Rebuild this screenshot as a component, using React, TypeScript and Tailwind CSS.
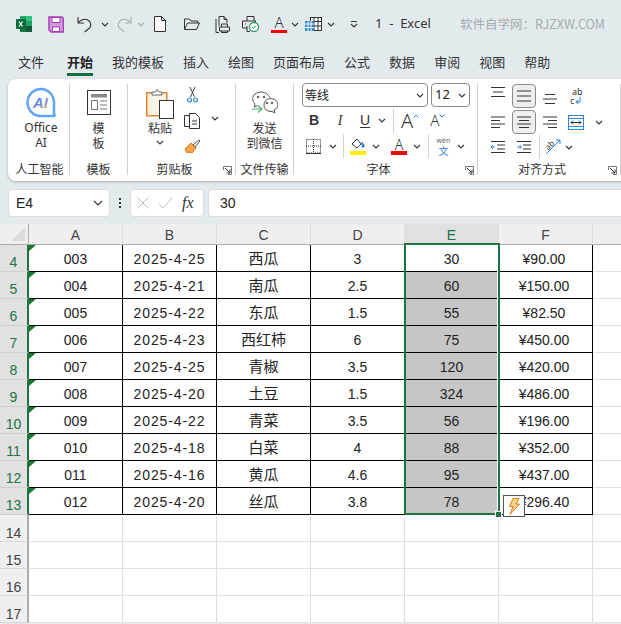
import type { ReactNode } from "react";

const cjk = "font-['Noto_Sans_CJK_SC','Noto_Sans',sans-serif]";
const cellFont = "font-['Liberation_Sans','Noto_Sans_CJK_SC',sans-serif]";

const rows = [
  [4, "003", "2025-4-25", "西瓜", "3", "30", "¥90.00"],
  [5, "004", "2025-4-21", "南瓜", "2.5", "60", "¥150.00"],
  [6, "005", "2025-4-22", "东瓜", "1.5", "55", "¥82.50"],
  [7, "006", "2025-4-23", "西红柿", "6", "75", "¥450.00"],
  [8, "007", "2025-4-25", "青椒", "3.5", "120", "¥420.00"],
  [9, "008", "2025-4-20", "土豆", "1.5", "324", "¥486.00"],
  [10, "009", "2025-4-22", "青菜", "3.5", "56", "¥196.00"],
  [11, "010", "2025-4-18", "白菜", "4", "88", "¥352.00"],
  [12, "011", "2025-4-16", "黄瓜", "4.6", "95", "¥437.00"],
  [13, "012", "2025-4-20", "丝瓜", "3.8", "78", "¥296.40"],
];

function Chev({ className = "" }: { className?: string }) {
  return (
    <svg viewBox="0 0 8 5" className={"w-2 h-[5px] shrink-0 " + className} fill="none" stroke="#333" strokeWidth="1.1">
      <path d="M1 1l3 3 3-3" />
    </svg>
  );
}

function Ic({ w, h, children, className = "" }: { w: number; h: number; children: ReactNode; className?: string }) {
  return (
    <svg width={w} height={h} viewBox={`0 0 ${w} ${h}`} fill="none" stroke="#333" strokeWidth="1" className={"shrink-0 " + className}>
      {children}
    </svg>
  );
}

function Launcher() {
  return (
    <Ic w={9} h={9}>
      <path d="M.5 4V.5h8V8.500H5" stroke="#777" />
      <path d="M2 2l5 5M7 3.500V7H3.500" stroke="#333" />
    </Ic>
  );
}

function Lines({ kind }: { kind: "top" | "bot" | "left" | "right" }) {
  const sets = {
    top: ["M1 1.500h14", "M3 6h10", "M1 10.500h14"],
    bot: ["M3 1.500h10", "M1 6h14", "M3 10.500h10"],
    left: ["M1 2h14", "M1 5.500h9", "M1 9h14", "M1 12.500h9"],
    right: ["M1 2h14", "M6 5.500h9", "M1 9h14", "M6 12.500h9"],
  };
  return <Ic w={16} h={14}>{sets[kind].map((d) => <path key={d} d={d} />)}</Ic>;
}

function Group({ w, label, children, launcher }: { w: number; label: string; children: ReactNode; launcher?: boolean }) {
  return (
    <div className="h-[91px] mt-[5px] shrink-0 flex flex-col border-r border-[#d2d2d2]" style={{ width: w }}>
      <div className="h-[75px]">{children}</div>
      <div className={"h-[16px] relative flex items-center justify-center text-[12px] leading-none text-[#333] " + (launcher ? "pr-[14px]" : "")}>
        <span className="mt-[3px] whitespace-nowrap">{label}</span>
        {launcher && <span className="absolute right-[3px] bottom-0 flex"><Launcher /></span>}
      </div>
    </div>
  );
}

function TitleBar() {
  return (
    <div className="h-[48px] flex items-center pl-[16px]">
      <svg width="16" height="16" viewBox="0 0 16 16" className="shrink-0">
        <rect x="4" width="12" height="16" rx="1" fill="#21a366" />
        <rect x="10" width="6" height="5" fill="#33c481" />
        <rect x="10" y="10" width="6" height="6" fill="#185c37" />
        <rect x="4" y="10" width="6" height="6" fill="#107c41" />
        <rect y="3" width="10" height="10" rx="1" fill="#0e6b3a" />
        <path d="M3 5.500l3.500 5M6.500 5.500l-3.500 5" stroke="#fff" strokeWidth="1.200" />
      </svg>
      <svg width="16" height="17" viewBox="0 0 16 17" className="ml-[16px] shrink-0">
        <path d="M1 1h13l1.500 1.500V16H3l-2-2z" fill="#d19ad9" stroke="#a63fb6" strokeWidth="1.500" />
        <rect x="4" y="1.500" width="8" height="5" fill="#fff" stroke="#a63fb6" />
        <rect x="4.500" y="11" width="7" height="4.500" fill="#fff" stroke="#a63fb6" />
      </svg>
      <Ic w={16} h={17} className="ml-[13px]">
        <path d="M1 1v6h6M1.500 6.500C4 3 8.500 2.500 11.500 4.500c3 2.500 3 6 .5 8L7.500 16" strokeWidth="1.100" />
      </Ic>
      <Chev className="ml-[8px]" />
      <Ic w={15} h={17} className="ml-[8px]">
        <path d="M14 1v6H8M13.500 6.500C11 3 6.500 2.500 3.500 4.500c-3 2.500-3 6-.5 8L7.500 16" stroke="#a9adb0" strokeWidth="1.100" />
      </Ic>
      <svg viewBox="0 0 8 5" className="w-2 h-[5px] ml-[5px] shrink-0" fill="none" stroke="#a9adb0" strokeWidth="1.100"><path d="M1 1l3 3 3-3" /></svg>
      <Ic w={12} h={16} className="ml-[9px]">
        <path d="M.5.500h7l4 4v11H.5zM7.500.500v4h4" fill="#fff" />
      </Ic>
      <Ic w={16} h={12} className="ml-[18px]">
        <path d="M.5 11V1h5l1.500 2h6.500v2M.5 11.500h12l3-6.500H3.500z" />
      </Ic>
      <Ic w={15} h={17} className="ml-[15px]">
        <path d="M4 10V.5h5l3 3V7M9 .5v3h3M1 16.500V3M1 16.500h3" />
        <path d="M4.500 11h10v4h-10zM6.500 11V8h6v3M6.500 15v1.500h6V15" />
      </Ic>
      <svg width="17" height="16" viewBox="0 0 17 16" className="ml-[12px] shrink-0" fill="none" stroke="#333">
        <path d="M5 5V.5h7V5M5 12H.5V5h13v2M3 8h1M5 10v5.500h3" />
        <circle cx="12" cy="11" r="4.500" fill="#fff" stroke="#3a9e6b" strokeWidth="1.300" />
        <path d="M10 11l1.500 1.500 2.500-3" stroke="#3a9e6b" />
      </svg>
      <div className="ml-[12px] w-[16px] h-[18px] flex flex-col items-center shrink-0">
        <span className="font-['Noto_Sans'] text-[15px] leading-[14px] text-[#333] font-light">A</span>
        <span className="mt-[1px] h-[4px] w-[16px] bg-[#ff0000]" />
      </div>
      <Chev className="ml-[4px]" />
      <svg width="17" height="16" viewBox="0 0 17 16" className="ml-[6px] shrink-0" fill="none" stroke="#333">
        <rect x="5.500" y="1.500" width="11" height="13" fill="#fff" />
        <path d="M5.500 5.500h11M5.500 10h11M9 1.500v13M13 1.500v13" />
        <rect x="0" y="5" width="9" height="10" fill="#2e86d6" stroke="none" />
        <path d="M0 8h9M0 11.500h9M3 5v10M6 5v10" stroke="#fff" />
      </svg>
      <Chev className="ml-[5px]" />
      <svg viewBox="0 0 8 7" className="w-2 h-[7px] ml-[15px] shrink-0" fill="none" stroke="#333" strokeWidth="1.100"><path d="M1 .5h6M1 3l3 3 3-3" /></svg>
      <span className="ml-[17px] font-['Noto_Sans'] text-[13px] text-[#333] whitespace-pre">1  -  Excel</span>
      <span className={"ml-[29px] text-[12.500px] text-[#a6abae] whitespace-nowrap " + cjk}>软件自学网：RJZXW.COM</span>
    </div>
  );
}

function Tabs() {
  const tabs = ["文件", "开始", "我的模板", "插入", "绘图", "页面布局", "公式", "数据", "审阅", "视图", "帮助"];
  return (
    <div className={"h-[31px] flex gap-[19px] pl-[18px] text-[13px] text-[#333] " + cjk}>
      {tabs.map((t) => (
        <div key={t} className={"h-[28px] flex items-center border-b-[3px] " + (t === "开始" ? "font-bold text-[#222] border-[#146c3f] ml-[4px]" : "border-transparent")}>
          <span className="mt-[3px]">{t}</span>
        </div>
      ))}
    </div>
  );
}

function AiIcon() {
  return (
    <svg width="32" height="31" viewBox="0 0 32 31" className="shrink-0">
      <defs>
        <linearGradient id="aiText" x1="0" y1="0" x2="1" y2="1">
          <stop offset="0.4" stopColor="#5a84ee" />
          <stop offset="1" stopColor="#e8a060" />
        </linearGradient>
      </defs>
      <path d="M16 2a13.500 13.500 0 1 0 0 27h12a1 1 0 0 0 1-2V15.500A13.500 13.500 0 0 0 16 2z" fill="#fff" stroke="#62a4f6" strokeWidth="2.500" />
      <text x="15.500" y="21" textAnchor="middle" fontSize="15" fontWeight="800" fontStyle="italic" fontFamily="Liberation Sans" fill="url(#aiText)">AI</text>
    </svg>
  );
}

function Ribbon() {
  return (
    <div className={"ml-[8px] w-[640px] h-[102px] bg-white rounded-l-lg shadow-[0_1px_3px_rgba(0,0,0,0.25)] flex pl-[2px] " + cjk}>
      <Group w={60} label="人工智能">
        <div className="flex flex-col items-center pl-[3px] pt-[3px] text-[12px] leading-[15px] text-[#333]">
          <AiIcon />
          <span className="mt-[2px] font-['Noto_Sans']">Office</span>
          <span className="font-['Noto_Sans']">AI</span>
        </div>
      </Group>
      <Group w={58} label="模板">
        <div className="flex flex-col items-center text-[12px] leading-[15px] text-[#333]">
          <svg width="24" height="25" viewBox="0 0 24 25" className="mt-[6px] shrink-0" fill="none" stroke="#333">
            <rect x=".5" y=".5" width="23" height="24" fill="#fff" />
            <rect x="4" y="4" width="16" height="3.500" fill="#8a8a8a" stroke="none" />
            <rect x="4.500" y="10.500" width="6" height="9" stroke="#777" />
            <path d="M13 11h7M13 15h7M13 19h7" stroke="#777" />
          </svg>
          <span className="mt-[5px]">模</span>
          <span>板</span>
        </div>
      </Group>
      <Group w={108} label="剪贴板" launcher>
        <div className="flex pl-[18px]">
          <div className="flex flex-col items-center w-[28px] text-[12px] text-[#333]">
            <svg width="28" height="31" viewBox="0 0 28 31" className="shrink-0 mt-[4px]" fill="none">
              <rect x=".75" y="4.750" width="20" height="23" fill="#fdf3e6" stroke="#e8862b" strokeWidth="1.500" />
              <path d="M6 7V4h3.500l1.500-2.500L13 4h3v3z" fill="#fff" stroke="#666" />
              <rect x="13.500" y="12.500" width="14" height="18" fill="#fff" stroke="#333" />
            </svg>
            <span className="mt-[1px] leading-[16px] whitespace-nowrap">粘贴</span>
            <Chev className="mt-[4px]" />
          </div>
          <div className="ml-[10px] flex flex-col w-[50px]">
            <svg width="11" height="16" viewBox="0 0 11 16" className="ml-[3px] mt-[3px]" fill="none" stroke="#444">
              <path d="M3 0l4.500 10M8 0L3.500 10" />
              <circle cx="2.500" cy="13" r="2" stroke="#2e86d6" strokeWidth="1.200" />
              <circle cx="8.500" cy="13" r="2" stroke="#2e86d6" strokeWidth="1.200" />
            </svg>
            <div className="flex items-center mt-[10px]">
              <Ic w={17} h={16}>
                <path d="M5 2.500H.5v11H5M5.500.500h6l4 4v11h-10zM8 8h5M8 11h5" />
              </Ic>
              <Chev className="ml-[10px] mt-[-6px]" />
            </div>
            <svg width="17" height="16" viewBox="0 0 17 16" className="mt-[10px]">
              <path d="M1 10l6-6 5 5-4 5-3-1-2 1z" fill="#f5a24a" stroke="#d9751a" />
              <path d="M9 6l6-5 1 1-5 6z" fill="#fff" stroke="#555" />
            </svg>
          </div>
        </div>
      </Group>
      <Group w={58} label="文件传输">
        <div className="flex flex-col items-center text-[12px] leading-[15px] text-[#333]">
          <svg width="26" height="25" viewBox="0 0 26 25" className="mt-[7px] shrink-0" fill="none" stroke="#555">
            <path d="M3 13C0 10 0 5 3 3s9-3 12 0 3 4 3 4M3 13l-.5 3 3-1.500" />
            <circle cx="6" cy="6" r=".8" fill="#555" />
            <circle cx="12" cy="6" r=".8" fill="#555" />
            <path d="M12 14a7 6 0 1 1 10 5l1 3-3-1.500a7 6 0 0 1-8-6.500z" fill="#fff" />
            <circle cx="15" cy="12" r=".8" fill="#555" />
            <circle cx="20" cy="12" r=".8" fill="#555" />
            <path d="M0 18h10M6 14.500L10 18l-4 3.500" stroke="#4caf6e" strokeWidth="1.200" />
          </svg>
          <span className="mt-[4px]">发送</span>
          <span className="whitespace-nowrap">到微信</span>
        </div>
      </Group>
      <Group w={184} label="字体" launcher>
        <div className="pl-[8px] -mt-[1px] flex flex-col">
          <div className="flex gap-[3px]">
            <div className="w-[126px] h-[24px] border border-[#8b8b8b] rounded-[4px] flex items-center justify-between px-[2px] pr-[3px] text-[12px] text-[#222]">
              <span>等线</span><Chev />
            </div>
            <div className="w-[39px] h-[24px] border border-[#8b8b8b] rounded-[4px] flex items-center justify-between pl-[3px] pr-[3px] text-[13px] text-[#222] font-['Noto_Sans']">
              <span>12</span><Chev />
            </div>
          </div>
          <div className="flex items-center h-[27px] text-[#333] font-['Liberation_Sans']">
            <b className="ml-[6px] w-[12px] text-[14px] text-center">B</b>
            <i className="ml-[14px] w-[12px] text-[14px] text-center font-['Liberation_Serif']">I</i>
            <span className="ml-[13px] w-[12px] text-[14px] text-center underline underline-offset-2">U</span>
            <Chev className="ml-[7px]" />
            <span className="ml-[7px] w-px h-[24px] bg-[#d2d2d2]" />
            <span className="ml-[7px] text-[20px] leading-none font-['Noto_Sans'] font-light">A</span>
            <svg viewBox="0 0 6 4" className="w-[6px] h-[4px] mb-[10px]" fill="none" stroke="#2e86d6"><path d="M.5 3.500L3 1l2.500 2.500" /></svg>
            <span className="ml-[11px] text-[15px] leading-none font-['Noto_Sans'] font-light">A</span>
            <svg viewBox="0 0 6 4" className="w-[6px] h-[4px] mb-[10px]" fill="none" stroke="#2e86d6"><path d="M.5.500L3 3 5.500.500" /></svg>
          </div>
          <div className="flex items-center h-[24px]">
            <svg width="15" height="15" viewBox="0 0 15 15" className="ml-[4px] shrink-0" fill="none" stroke="#333" strokeDasharray="1 1">
              <rect x=".5" y=".5" width="14" height="13.500" />
              <path d="M7.500 0v14M0 7h15" />
              <path d="M0 14.500h15" strokeDasharray="none" />
            </svg>
            <Chev className="ml-[8px]" />
            <span className="ml-[6px] w-px h-[24px] bg-[#d2d2d2]" />
            <div className="ml-[6px] w-[16px] flex flex-col items-center">
              <svg width="14" height="13" viewBox="0 0 14 13" fill="none" stroke="#333">
                <path d="M1 6l5-5 4 5-4 4z" />
                <path d="M11 4l2 3v2h-2z" fill="#2e86d6" stroke="#2e86d6" />
              </svg>
              <span className="h-[4px] w-[16px] bg-[#ffee00]" />
            </div>
            <Chev className="ml-[6px]" />
            <div className="ml-[11px] w-[16px] flex flex-col items-center">
              <span className="font-['Noto_Sans'] text-[14px] leading-[13px] font-light text-[#333]">A</span>
              <span className="h-[4px] w-[16px] bg-[#ff0000]" />
            </div>
            <Chev className="ml-[6px]" />
            <span className="ml-[7px] w-px h-[24px] bg-[#d2d2d2]" />
            <div className="ml-[7px] w-[15px] flex flex-col items-center">
              <span className="font-['Noto_Sans'] text-[7px] leading-[9px] text-[#666]">wén</span>
              <span className="text-[10px] leading-[11px] text-[#2e86d6]">文</span>
            </div>
            <Chev className="ml-[6px]" />
          </div>
        </div>
      </Group>
      <Group w={143} label="对齐方式" launcher>
        <div className="pl-[12px] -mt-[1px] flex flex-col">
          <div className="flex items-center h-[26px]">
            <span className="-translate-y-[3px]"><Lines kind="top" /></span>
            <span className="ml-[6px] w-[24px] h-[24px] rounded-[4px] bg-[#efefef] border border-[#8b8b8b] flex items-center justify-center"><Ic w={14} h={14}><path d="M0 2h14M0 7h14M0 12h14" /></Ic></span>
            <span className="ml-[6px] translate-y-[4px]"><Lines kind="bot" /></span>
            <div className="ml-[12px] w-[16px] flex flex-col font-['Noto_Sans'] text-[9px] leading-[9px] text-[#333]">
              <span className="pl-[2px]">ab</span>
              <span className="flex items-center">c<span className="text-[#2e86d6] text-[10px]">↲</span></span>
            </div>
          </div>
          <div className="flex items-center h-[26px]">
            <Lines kind="left" />
            <span className="ml-[6px] w-[24px] h-[24px] rounded-[4px] bg-[#efefef] border border-[#8b8b8b] flex items-center justify-center"><Ic w={14} h={14}><path d="M0 2h14M2 5.500h10M0 9h14M2 12.500h10" /></Ic></span>
            <span className="ml-[6px]"><Lines kind="right" /></span>
            <svg width="16" height="15" viewBox="0 0 16 15" className="ml-[10px] shrink-0" fill="none" stroke="#2e86d6">
              <rect x=".5" y=".5" width="15" height="14" />
              <path d="M.5 3.500h15M.5 11.500h15" />
              <path d="M3 7.500h10M5 5.500l-2 2 2 2M11 5.500l2 2-2 2" stroke="#333" />
            </svg>
            <Chev className="ml-[11px]" />
          </div>
          <div className="flex items-center h-[24px]">
            <Ic w={16} h={14}>
              <path d="M1 1.500h14M7 5h8M7 9h8M1 12.500h14" />
              <path d="M5 7H1M3 5L1 7l2 2" stroke="#2e86d6" />
            </Ic>
            <Ic w={16} h={14} className="ml-[10px]">
              <path d="M1 1.500h14M7 5h8M7 9h8M1 12.500h14" />
              <path d="M1 7h4M3.500 5l2 2-2 2" stroke="#2e86d6" />
            </Ic>
            <span className="ml-[7px] w-px h-[24px] bg-[#d2d2d2]" />
            <svg width="16" height="16" viewBox="0 0 16 16" className="ml-[5px] shrink-0 overflow-visible" fill="none" stroke="#2e86d6">
              <path d="M1 15L15 1M11 1h4v4" />
              <text x="1" y="10" fontSize="8" fill="#333" stroke="none" fontFamily="Noto Sans" transform="rotate(-45 4 8)">ab</text>
            </svg>
            <Chev className="ml-[4px]" />
          </div>
        </div>
      </Group>
    </div>
  );
}

function FormulaBar() {
  return (
    <div className={"flex items-center h-[28px] mt-[8px] pl-[8px] text-[14px] text-[#222] " + cellFont}>
      <div className="w-[102px] h-[28px] bg-white rounded-[4px] border border-[#dcdcdc] flex items-center justify-between pl-[7px] pr-[6px] shrink-0">
        <span>E4</span>
        <svg viewBox="0 0 10 6" className="w-[10px] h-[6px]" fill="none" stroke="#333" strokeWidth="1.200"><path d="M1 1l4 4 4-4" /></svg>
      </div>
      <div className="w-[2px] h-[10px] ml-[9px] flex flex-col justify-between shrink-0">
        <span className="w-[2px] h-[2px] bg-[#333]" />
        <span className="w-[2px] h-[2px] bg-[#333]" />
        <span className="w-[2px] h-[2px] bg-[#333]" />
      </div>
      <div className="ml-[9px] w-[74px] h-[28px] bg-white rounded-[4px] border border-[#dcdcdc] flex items-center pl-[6px] shrink-0">
        <Ic w={12} h={12}><path d="M.5.500l11 11M11.500.500l-11 11" stroke="#bcbcbc" /></Ic>
        <Ic w={15} h={12} className="ml-[9px]"><path d="M1 7l4 4L14 1" stroke="#bcbcbc" /></Ic>
        <span className="ml-[9px] font-['Liberation_Serif'] italic text-[16px] text-[#333]">fx</span>
      </div>
      <div className="ml-[4px] flex-1 h-[28px] bg-white rounded-l-[4px] border border-r-0 border-[#dcdcdc] flex items-center pl-[11px]">30</div>
    </div>
  );
}

function Sheet() {
  const heads = ["A", "B", "C", "D", "E", "F"];
  const empty = [14, 15, 16, 17];
  const cell = "border-r border-b border-black flex items-center justify-center pt-[2px]";
  return (
    <div className={"relative mt-[7px] bg-white text-[14px] text-[#222] grid grid-cols-[29px_repeat(6,94px)_1fr] grid-rows-[21px_repeat(14,27px)] overflow-hidden " + cellFont}>
      {/* column heads */}
      <div className="bg-[#efefef] border-r border-b border-[#ababab] flex items-end justify-end">
        <svg width="14" height="14" viewBox="0 0 14 14" className="mb-[3px] mr-[3px]"><path d="M14 0v14H0z" fill="#dcdcdc" /></svg>
      </div>
      {heads.map((h) => (
        <div key={h} className={"border-r border-b border-b-[#ababab] border-r-[#dcdcdc] flex items-center justify-center pt-[3px] " + (h === "E" ? "bg-[#e0e0e0] text-[#217346]" : "bg-[#efefef] text-[#444]")}>{h}</div>
      ))}
      <div className="bg-[#efefef] border-b border-[#ababab]" />

      {rows.map((r) => (
        <div key={String(r[0])} className="contents">
          <div className="bg-[#e1e1e1] border-r-2 border-r-[#217346] border-b border-b-[#d0d0d0] text-[#217346] flex items-center justify-center pt-[8px] leading-none">{r[0]}</div>
          <div className={"relative " + cell}>
            {r[1]}
            <svg width="7" height="6" viewBox="0 0 7 6" className="absolute left-0 top-0"><path d="M0 0h7L0 6z" fill="#137a2e" /></svg>
          </div>
          <div className={"tracking-[0.9px] " + cell}>{r[2]}</div>
          <div className={"text-[15px] " + cell}>{r[3]}</div>
          <div className={cell}>{r[4]}</div>
          <div className={cell + (r[0] === 4 ? "" : " bg-[#c6c6c6]")}>{r[5]}</div>
          <div className={"pr-[3px] " + cell}>{r[6]}</div>
          <div className="border-b border-[#e0e0e0]" />
        </div>
      ))}

      {empty.map((n) => (
        <div key={n} className="contents">
          <div className="bg-[#efefef] border-r-2 border-r-[#ababab] border-b border-b-[#d8d8d8] text-[#444] flex items-center justify-center pt-[9px] leading-none">{n}</div>
          {heads.map((h) => <div key={h} className="border-r border-b border-[#e0e0e0]" />)}
          <div className="border-b border-[#e0e0e0]" />
        </div>
      ))}

      {/* selection box over column E */}
      <div className="absolute left-[497px] top-[47px] w-px h-[244px] bg-white" />
      <div className="absolute left-[404px] top-[19px] w-[96px] h-[272px] border-2 border-[#217346]" />
      <div className="absolute left-[496px] top-[288px] w-[5px] h-[5px] bg-[#217346] outline outline-1 outline-white" />
      <div className="absolute left-[503px] top-[271px] w-[22px] h-[22px] bg-white border border-[#555] flex items-center justify-center">
        <svg width="12" height="17" viewBox="0 0 12 17"><path d="M5 .5h6L8 6h3.500L2 16.500 5 8.500H1.500z" fill="#fbd38a" stroke="#dd7a12" /></svg>
      </div>
    </div>
  );
}

export default function App() {
  return (
    <div className="w-[621px] h-[624px] bg-[#e3eaee] overflow-hidden">
      <TitleBar />
      <Tabs />
      <Ribbon />
      <FormulaBar />
      <Sheet />
    </div>
  );
}
